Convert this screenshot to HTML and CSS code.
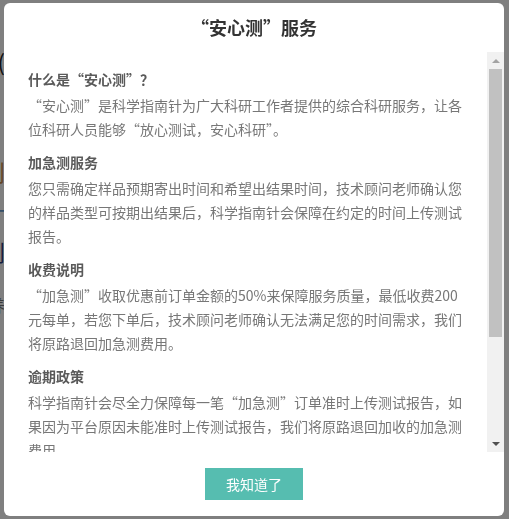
FILE: index.html
```html
<!DOCTYPE html>
<html lang="zh-CN">
<head>
<meta charset="utf-8">
<title>安心测服务</title>
<link rel="stylesheet" href="styles.css">
</head>
<body>
<div class="page">
  <div class="bg-col">
    <div class="bg-line bg-dark">服务说明(</div>
    <div class="bg-line bg-brown">原则</div>
    <div class="bg-line bg-blue">统计</div>
    <div class="bg-line bg-navy">计划</div>
    <div class="bg-line bg-gray">培养</div>
  </div>
</div>
<div class="overlay"></div>
<div class="modal">
  <div class="modal-header">
    <h2 class="modal-title">“安心测”服务</h2>
  </div>
  <div class="modal-body">
    <div class="content">
      <section class="sec">
        <h4 class="sec-title">什么是“安心测”？</h4>
        <p class="sec-text">“安心测”是科学指南针为广大科研工作者提供的综合科研服务，让各位科研人员能够“放心测试，安心科研”。</p>
      </section>
      <section class="sec">
        <h4 class="sec-title">加急测服务</h4>
        <p class="sec-text">您只需确定样品预期寄出时间和希望出结果时间，技术顾问老师确认您的样品类型可按期出结果后，科学指南针会保障在约定的时间上传测试报告。</p>
      </section>
      <section class="sec">
        <h4 class="sec-title">收费说明</h4>
        <p class="sec-text">“加急测”收取优惠前订单金额的50%来保障服务质量，最低收费200元每单，若您下单后，技术顾问老师确认无法满足您的时间需求，我们将原路退回加急测费用。</p>
      </section>
      <section class="sec">
        <h4 class="sec-title">逾期政策</h4>
        <p class="sec-text">科学指南针会尽全力保障每一笔“加急测”订单准时上传测试报告，如果因为平台原因未能准时上传测试报告，我们将原路退回加收的加急测费用。</p>
      </section>
    </div>
    <div class="scrollbar">
      <div class="sb-btn"><span class="arrow-up"></span></div>
      <div class="sb-track"><div class="sb-thumb"></div></div>
      <div class="sb-btn"><span class="arrow-down"></span></div>
    </div>
  </div>
  <div class="modal-footer">
    <button class="btn-ok" type="button">我知道了</button>
  </div>
</div>
</body>
</html>
```
FILE: styles.css
```css
* { box-sizing: border-box; }
html, body {
  margin: 0;
  padding: 0;
  width: 509px;
  height: 519px;
  overflow: hidden;
  font-family: "Microsoft YaHei", "Noto Sans CJK SC", "Noto Sans", sans-serif;
}
.page {
  height: 519px;
  background: #fff;
  padding-top: 50px;
}
.bg-col {
  width: 5px;
  overflow: hidden;
  display: flex;
  flex-direction: column;
  align-items: flex-end;
  gap: 18px;
  font-size: 22px;
  line-height: 22px;
}
.bg-line { white-space: nowrap; }
.bg-dark { color: #222; margin-bottom: 70px; }
.bg-brown { color: #c98a4a; }
.bg-blue { color: #6a9fd0; }
.bg-navy { color: #2c3a7b; }
.bg-gray { color: #777; font-size: 16px; margin-top: 14px; }
.overlay {
  position: fixed;
  inset: 0;
  background: rgba(0, 0, 0, 0.5);
}
.modal {
  position: fixed;
  left: 4px;
  top: 3px;
  width: 500px;
  height: 513px;
  background: #fff;
  border-radius: 6px;
  display: flex;
  flex-direction: column;
  overflow: hidden;
}
.modal-header {
  height: 49px;
  padding-top: 12px;
  text-align: center;
}
.modal-title {
  margin: 0;
  font-size: 18px;
  line-height: 24px;
  font-weight: bold;
  color: #333;
}
.modal-body {
  height: 400px;
  display: flex;
}
.content {
  flex: 1;
  overflow: hidden;
  padding: 15px 19px 0 24px;
}
.sec + .sec { margin-top: 9px; }
.sec-title {
  margin: 0 0 2px;
  font-size: 14px;
  line-height: 24px;
  font-weight: bold;
  color: #5a5a5a;
}
.sec-text {
  margin: 0;
  font-size: 14px;
  line-height: 24px;
  color: #777;
}
.scrollbar {
  width: 17px;
  background: #f1f1f1;
  display: flex;
  flex-direction: column;
}
.sb-btn {
  height: 17px;
  display: flex;
  align-items: center;
  justify-content: center;
}
.arrow-up {
  width: 0;
  height: 0;
  border-left: 4px solid transparent;
  border-right: 4px solid transparent;
  border-bottom: 4px solid #a3a3a3;
}
.arrow-down {
  width: 0;
  height: 0;
  border-left: 4px solid transparent;
  border-right: 4px solid transparent;
  border-top: 4px solid #505050;
}
.sb-track { flex: 1; }
.sb-thumb {
  height: 268px;
  margin: 0 2px;
  background: #c1c1c1;
}
.modal-footer {
  flex: 1;
  display: flex;
  align-items: center;
  justify-content: center;
}
.btn-ok {
  width: 98px;
  height: 32px;
  border: none;
  background: #56bdb0;
  color: #fff;
  font-family: inherit;
  font-size: 14px;
  padding: 0;
  cursor: pointer;
}
```
